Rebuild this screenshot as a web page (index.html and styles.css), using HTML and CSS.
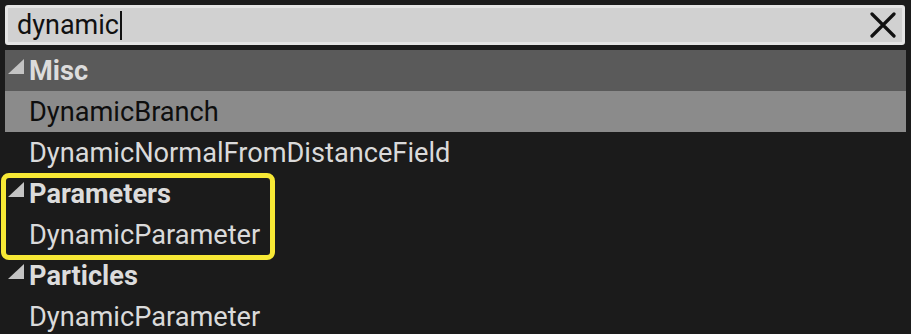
FILE: index.html
```html
<!DOCTYPE html>
<html>
<head>
<meta charset="utf-8">
<link rel="stylesheet" href="styles.css">
</head>
<body>
<div class="panel">
  <div class="search">
    <div class="search-inner">
      <span class="query">dynamic</span><span class="caret"></span>
      <span class="spacer"></span>
      <svg class="clear" width="26" height="26" viewBox="0 0 26 26"><path d="M2 2 L24 24 M24 2 L2 24" stroke="#111" stroke-width="3.2" stroke-linecap="round"/></svg>
    </div>
  </div>
  <div class="list">
    <div class="row header active"><span class="tri"></span><span class="label">Misc</span></div>
    <div class="row item selected"><span class="label">DynamicBranch</span></div>
    <div class="row item"><span class="label">DynamicNormalFromDistanceField</span></div>
    <div class="group">
      <div class="highlight"></div>
      <div class="row header"><span class="tri"></span><span class="label">Parameters</span></div>
      <div class="row item"><span class="label">DynamicParameter</span></div>
    </div>
    <div class="row header"><span class="tri"></span><span class="label">Particles</span></div>
    <div class="row item"><span class="label">DynamicParameter</span></div>
  </div>
</div>
</body>
</html>
```
FILE: styles.css
```css
html, body {
  margin: 0;
  padding: 0;
  background: #1b1b1b;
  width: 911px;
  height: 334px;
  overflow: hidden;
}
.panel {
  display: flex;
  flex-direction: column;
  padding: 5px 5px 0 5px;
  font-family: Roboto, "Liberation Sans", sans-serif;
}
.search {
  width: 900px;
  height: 40px;
  box-sizing: border-box;
  border: 3px solid #e4e4e4;
  border-radius: 3px;
  background: #d1d1d1;
}
.search-inner {
  display: flex;
  align-items: center;
  height: 100%;
  padding: 0 6px 0 9px;
}
.query {
  font-size: 27px;
  color: #111;
  line-height: 30px;
}
.caret {
  display: inline-block;
  width: 2px;
  height: 29px;
  background: #111;
  margin-left: 1px;
}
.spacer { flex: 1; }
.clear { display: block; }
.list {
  margin-top: 5px;
  width: 901px;
  display: flex;
  flex-direction: column;
}
.row {
  height: 41px;
  display: flex;
  align-items: center;
  font-size: 27.2px;
  color: #dadada;
}
.row.header .label { font-weight: 700; color: #dcdcdc; }
.row.header.active { background: #5a5a5a; }
.row.item .label { margin-left: 24px; }
.row.selected { background: #8b8b8b; }
.row.selected .label { color: #0e0e0e; }
.tri {
  width: 0;
  height: 0;
  margin-left: 3px;
  margin-right: 5px;
  border-style: solid;
  border-width: 0 0 15px 16px;
  border-color: transparent transparent #c4c4c4 transparent;
  position: relative;
  top: -4px;
}
.group {
  position: relative;
}
.highlight {
  position: absolute;
  left: -4px;
  top: 0px;
  width: 274px;
  height: 87px;
  box-sizing: border-box;
  border: 5px solid #f7e935;
  border-radius: 8px;
}
```
